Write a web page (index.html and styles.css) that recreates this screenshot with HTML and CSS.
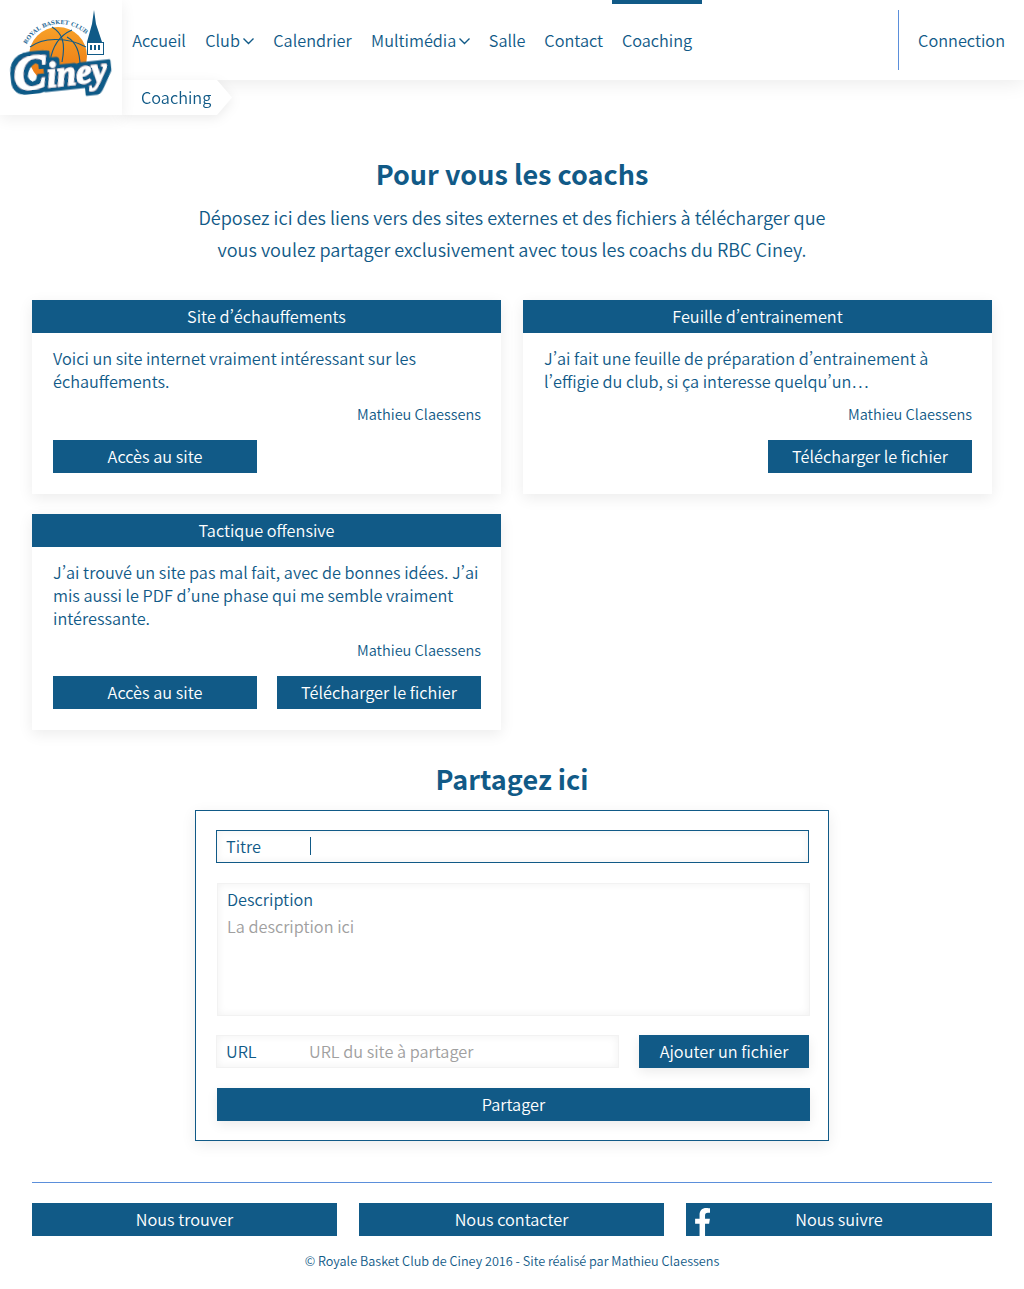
FILE: index.html
```html
<!DOCTYPE html>
<html lang="fr">
<head>
<meta charset="utf-8">
<title>Coaching - RBC Ciney</title>
<link rel="stylesheet" href="styles.css">
</head>
<body>
<header class="topbar">
  <a class="logo" href="#" aria-label="Royal Basket Club Ciney">
    <svg viewBox="0 0 122 115" width="122" height="115">
      <defs>
        <linearGradient id="ballfill" x1="0" y1="0" x2="0" y2="1">
          <stop offset="0" stop-color="#f7a128"/>
          <stop offset="1" stop-color="#ea7310"/>
        </linearGradient>
        <path id="arc" d="M22.5 62A37.5 37.5 0 0 1 92 42"/>
        <filter id="halo" x="-10%" y="-20%" width="120%" height="140%">
          <feMorphology in="SourceAlpha" operator="dilate" radius="3.6" result="grown"/>
          <feFlood flood-color="#105a87"/>
          <feComposite in2="grown" operator="in" result="outline"/>
          <feMerge>
            <feMergeNode in="outline"/>
            <feMergeNode in="SourceGraphic"/>
          </feMerge>
        </filter>
      </defs>
      <circle cx="58" cy="56" r="29" fill="url(#ballfill)"/>
      <g fill="none" stroke="#105a87" stroke-width="1.1">
        <path d="M30 47C42 38 66 36 86 47"/>
        <path d="M52 27C62 33 66 42 62 62"/>
        <path d="M72 30C58 36 52 48 50 62"/>
        <path d="M67 37C76 42 80 52 80 66"/>
      </g>
      <path d="M94 10L96 24 102 42H87L92 24Z" fill="#105a87"/>
      <rect x="87.5" y="42.5" width="16" height="12" fill="#fff" stroke="#105a87" stroke-width="1"/>
      <rect x="90" y="45" width="2" height="5" fill="#105a87"/>
      <rect x="94" y="45" width="2" height="5" fill="#105a87"/>
      <rect x="98" y="45" width="2" height="5" fill="#105a87"/>
      <text class="logo-arc"><textPath href="#arc" startOffset="18">ROYAL BASKET CLUB</textPath></text>
      <text class="logo-name" filter="url(#halo)" transform="rotate(-6 60 70)" x="13" y="86"><tspan class="logo-cap">C</tspan>iney</text>
    </svg>
  </a>
  <nav class="mainnav">
    <a class="navlink" href="#">Accueil</a>
    <a class="navlink" href="#">Club<svg class="chev" viewBox="0 0 11 8" width="11" height="8"><path d="M.5 1.5L5.5 6.5l5-5"/></svg></a>
    <a class="navlink" href="#">Calendrier</a>
    <a class="navlink tight" href="#">Multimédia<svg class="chev" viewBox="0 0 11 8" width="11" height="8"><path d="M.5 1.5L5.5 6.5l5-5"/></svg></a>
    <a class="navlink narrow" href="#">Salle</a>
    <a class="navlink narrow" href="#">Contact</a>
    <a class="navlink narrow active" href="#">Coaching</a>
  </nav>
  <a class="login" href="#">Connection</a>
  <div class="crumbwrap"><a class="crumb" href="#">Coaching</a></div>
</header>

<main class="page">
  <h1 class="title">Pour vous les coachs</h1>
  <p class="intro">Déposez ici des liens vers des sites externes et des fichiers à télécharger que vous voulez partager exclusivement avec tous les coachs du RBC Ciney.</p>

  <section class="cards">
    <article class="card">
      <h2 class="card-head">Site d’échauffements</h2>
      <div class="card-body">
        <p class="card-text">Voici un site internet vraiment intéressant sur les échauffements.</p>
        <p class="card-author">Mathieu Claessens</p>
        <div class="card-actions">
          <a class="btn" href="#">Accès au site</a>
        </div>
      </div>
    </article>
    <article class="card">
      <h2 class="card-head">Feuille d’entrainement</h2>
      <div class="card-body">
        <p class="card-text">J’ai fait une feuille de préparation d’entrainement à l’effigie du club, si ça interesse quelqu’un…</p>
        <p class="card-author">Mathieu Claessens</p>
        <div class="card-actions">
          <span></span>
          <a class="btn" href="#">Télécharger le fichier</a>
        </div>
      </div>
    </article>
    <article class="card">
      <h2 class="card-head">Tactique offensive</h2>
      <div class="card-body">
        <p class="card-text">J’ai trouvé un site pas mal fait, avec de bonnes idées. J’ai mis aussi le PDF d’une phase qui me semble vraiment intéressante.</p>
        <p class="card-author">Mathieu Claessens</p>
        <div class="card-actions">
          <a class="btn" href="#">Accès au site</a>
          <a class="btn" href="#">Télécharger le fichier</a>
        </div>
      </div>
    </article>
  </section>

  <h2 class="title share-title">Partagez ici</h2>
  <form class="share">
    <div class="field focus"><span class="field-label">Titre</span><span class="caret"></span></div>
    <div class="area">
      <div class="area-label">Description</div>
      <div class="placeholder">La description ici</div>
    </div>
    <div class="url-row">
      <div class="field url"><span class="field-label">URL</span><span class="placeholder">URL du site à partager</span></div>
      <a class="btn add" href="#">Ajouter un fichier</a>
    </div>
    <a class="btn submit" href="#">Partager</a>
  </form>

  <footer class="foot">
    <div class="foot-links">
      <a class="btn" href="#">Nous trouver</a>
      <a class="btn" href="#">Nous contacter</a>
      <a class="btn social" href="#">
        <svg class="fb" viewBox="22 0 272 512" width="15" height="28"><path d="M279.14 288l14.22-92.66h-88.91v-60.13c0-25.35 12.42-50.06 52.24-50.06h40.42V6.26S260.43 0 225.36 0c-73.22 0-121.08 44.38-121.08 124.72v70.62H22.89V288h81.39v224h100.17V288z"/></svg>
        Nous suivre
      </a>
    </div>
    <p class="copy">© Royale Basket Club de Ciney 2016 - Site réalisé par Mathieu Claessens</p>
  </footer>
</main>
</body>
</html>
```

FILE: styles.css
```css
* { box-sizing: border-box; }
html, body { margin: 0; padding: 0; }
body {
  background: #fff;
  color: #115a87;
  font-family: "Noto Sans CJK SC", "Noto Sans", sans-serif;
  font-feature-settings: "pwid", "palt";
  font-size: 16.3px;
  font-weight: 350;
  line-height: 22.86px;
}
a { color: inherit; text-decoration: none; }
p, h1, h2 { margin: 0; }

.topbar {
  position: relative;
  display: flex;
  height: 80px;
  background: #fff;
  box-shadow: 0 2px 20px rgba(0, 0, 0, .09);
}
.logo {
  position: relative;
  z-index: 3;
  flex: none;
  display: block;
  width: 122px;
  height: 115px;
  background: #fff;
  box-shadow: 0 4px 14px rgba(0, 0, 0, .07);
}
.logo svg { display: block; }
.logo-arc {
  font-family: "DejaVu Serif", serif;
  font-size: 5.6px;
  font-weight: 700;
  fill: #2f6f9a;
}
.logo-name {
  font-family: "Liberation Serif", serif;
  font-size: 35px;
  font-style: italic;
  font-weight: 700;
  fill: #fff;
  stroke: #fff;
  stroke-width: 1px;
}
.logo-cap { font-size: 50px; }

.mainnav { display: flex; flex: 1; padding-left: .6px; }
.navlink {
  display: flex;
  align-items: center;
  height: 80px;
  padding: 0 9.7px;
}
.navlink.tight { padding-right: 9.1px; }
.navlink.narrow { padding-left: 9.4px; padding-right: 9.4px; }
.navlink.active { box-shadow: inset 0 4px 0 #115a87; }
.chev { margin-left: 3px; margin-top: 2px; }
.chev path { fill: none; stroke: #115a87; stroke-width: 1.4; }

.login {
  align-self: center;
  display: flex;
  align-items: center;
  height: 60px;
  padding: 0 19px;
  border-left: 1px solid #5b8fdb;
}

.crumbwrap {
  position: absolute;
  z-index: 2;
  left: 122px;
  top: 80px;
  filter: drop-shadow(0 3px 6px rgba(0, 0, 0, .08));
}
.crumb {
  display: block;
  width: 110px;
  height: 35px;
  padding: 6px 0 0 19px;
  background: #fff;
  clip-path: polygon(0 0, 95px 0, 110px 50%, 95px 100%, 0 100%);
}

.page { padding: 75px 32px 18px; }
.title {
  font-size: 27px;
  font-weight: 700;
  line-height: 38px;
  text-align: center;
}
.intro {
  max-width: 640px;
  margin: 8px auto 35px;
  font-size: 18.13px;
  line-height: 32px;
  text-align: center;
}

.cards {
  display: grid;
  grid-template-columns: 469px 469px;
  column-gap: 22px;
  row-gap: 20px;
  align-items: start;
}
.card {
  background: #fff;
  box-shadow: 0 4px 14px rgba(0, 0, 0, .08);
}
.card-head {
  height: 33px;
  background: #115a87;
  color: #fff;
  font-size: 16.3px;
  font-weight: 350;
  line-height: 33px;
  text-align: center;
}
.card-body { padding: 14.4px 20px 21px 21px; }
.card-author {
  margin: 9.9px 0 15.55px;
  font-size: 14.55px;
  line-height: 21px;
  text-align: right;
}
.card-actions {
  display: grid;
  grid-template-columns: 204px 204px;
  column-gap: 20px;
}
.btn {
  display: block;
  height: 33px;
  background: #115a87;
  color: #fff;
  line-height: 33px;
  text-align: center;
}

.share-title { margin-top: 30px; }
.share {
  width: 634px;
  height: 331px;
  margin: 12px auto 0;
  padding: 19px 19px 0 20px;
  border: 1px solid #115a87;
  box-shadow: 0 4px 14px rgba(0, 0, 0, .08);
}
.field {
  display: flex;
  align-items: center;
  width: 593px;
  height: 33px;
  padding-left: 9px;
  box-shadow: inset 0 0 8px rgba(0, 0, 0, .06);
}
.field.focus { border: 1px solid #115a87; }
.field-label { flex: none; width: 84px; }
.caret { width: 1px; height: 18px; background: #115a87; }
.placeholder { color: #a0a0a0; }
.area {
  width: 593px;
  height: 133px;
  margin: 20px 0 19px 1px;
  padding: 4px 9px;
  border: 1px solid #f2f2f2;
  box-shadow: inset 0 0 8px rgba(0, 0, 0, .06);
}
.area-label { margin-bottom: 4.14px; }
.url-row { display: flex; justify-content: space-between; width: 593px; }
.field.url { width: 403px; padding-left: 9px; border: 1px solid #f2f2f2; }
.field.url .field-label { width: 83px; }
.add { width: 170px; box-shadow: 0 4px 12px rgba(0, 0, 0, .08); }
.submit {
  width: 593px;
  margin: 20px 0 0 1px;
  box-shadow: 0 4px 12px rgba(0, 0, 0, .08);
}

.foot {
  margin-top: 41px;
  padding-top: 20px;
  border-top: 1px solid #5b8fdb;
}
.foot-links {
  display: grid;
  grid-template-columns: 305px 305px 306px;
  column-gap: 22px;
}
.social { position: relative; }
.fb {
  position: absolute;
  left: 9px;
  top: 5px;
  fill: #fff;
}
.copy {
  margin-top: 14px;
  font-size: 12.68px;
  line-height: 21px;
  text-align: center;
}
```
